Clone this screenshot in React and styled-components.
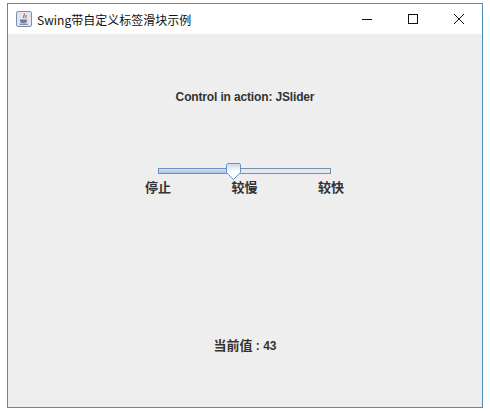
import styled, { createGlobalStyle } from "styled-components";

const GlobalStyle = createGlobalStyle`
  html, body {
    margin: 0;
    padding: 0;
    background: #fff;
  }
`;

const LABELS = ["停止", "较慢", "较快"];
const VALUE = 43;

export default function App() {
  return (
    <>
      <GlobalStyle />
      <Window>
        <TitleBar>
          <AppIcon />
          <Title>Swing带自定义标签滑块示例</Title>
          <Controls>
            <ControlButton aria-label="minimize">
              <svg width="12" height="12" viewBox="0 0 12 12">
                <path d="M1 6.5h10" stroke="#111" fill="none" />
              </svg>
            </ControlButton>
            <ControlButton aria-label="maximize">
              <svg width="12" height="12" viewBox="0 0 12 12">
                <rect x="1.5" y="1.5" width="9" height="9" stroke="#111" fill="none" />
              </svg>
            </ControlButton>
            <ControlButton aria-label="close">
              <svg width="12" height="12" viewBox="0 0 12 12">
                <path d="M1 1l10 10M11 1L1 11" stroke="#111" fill="none" />
              </svg>
            </ControlButton>
          </Controls>
        </TitleBar>
        <Content>
          <Heading>Control in action: JSlider</Heading>
          <SliderArea>
            <Track>
              <TrackFill value={VALUE} />
              <Thumb />
            </Track>
            <Ticks>
              {LABELS.map((label) => (
                <Tick key={label}>{label}</Tick>
              ))}
            </Ticks>
          </SliderArea>
          <Status>
            <Tick>当前值</Tick> : {VALUE}
          </Status>
        </Content>
      </Window>
    </>
  );
}

function AppIcon() {
  return (
    <IconBox>
      <svg width="16" height="16" viewBox="0 0 16 16">
        <rect x="0.5" y="0.5" width="15" height="15" rx="1.5" fill="#dfe6ef" stroke="#7f8fa6" />
        <path d="M8 2.5c1.5 1.5-1.5 2.5 0 4.5M10 4c.8 1-1 1.500 0 3" stroke="#d9531e" strokeWidth="1.1" fill="none" />
        <path d="M4 8.500h7v1.500c0 1.200-1 2-2.500 2h-2C5 12 4 11.200 4 10z" fill="#6b7f99" />
        <path d="M3.500 13.200h8.500" stroke="#5b6f8a" fill="none" />
      </svg>
    </IconBox>
  );
}

function Thumb() {
  return (
    <ThumbBox>
      <svg width="15" height="17" viewBox="0 0 15 17">
        <defs>
          <linearGradient id="thumbFill" x1="0" y1="0" x2="0" y2="1">
            <stop offset="0" stopColor="#c5d6ea" />
            <stop offset="0.5" stopColor="#fff" />
            <stop offset="1" stopColor="#fff" />
          </linearGradient>
        </defs>
        <path
          d="M1.500 0.500h12l1 1v8l-7 7-7-7v-8z"
          fill="url(#thumbFill)"
          stroke="#6b8fc4"
        />
      </svg>
    </ThumbBox>
  );
}

const Window = styled.div`
  box-sizing: border-box;
  width: 476px;
  height: 405px;
  margin: 3px 0 0 7px;
  border: 1px solid #4a90b8;
  display: flex;
  flex-direction: column;
`;

const TitleBar = styled.div`
  height: 30px;
  flex: none;
  background: #fff;
  display: flex;
  align-items: center;
  padding-left: 8px;
`;

const IconBox = styled.span`
  width: 16px;
  height: 16px;
  display: flex;
  margin-right: 5px;
`;

const Title = styled.span`
  font: 12px "Noto Sans CJK SC", "Liberation Sans", sans-serif;
  color: #111;
  flex: 1;
`;

const Controls = styled.div`
  display: flex;
`;

const ControlButton = styled.span`
  width: 46px;
  height: 30px;
  display: flex;
  align-items: center;
  justify-content: center;
`;

const Content = styled.div`
  flex: 1;
  background: #eeeeee;
  display: flex;
  flex-direction: column;
  align-items: center;
  color: #333;
  font-family: "Liberation Sans", "Noto Sans CJK SC", sans-serif;
  font-size: 12px;
  font-weight: bold;
`;

const Heading = styled.div`
  margin-top: 55px;
  line-height: 16px;
  letter-spacing: -0.15px;
`;

const SliderArea = styled.div`
  margin: 63px 1px 0 0;
  width: 173px;
`;

const Track = styled.div`
  position: relative;
  box-sizing: border-box;
  height: 6px;
  background: #e4e9f0;
  border: 1px solid #7d8fa8;
`;

const TrackFill = styled.div`
  box-sizing: border-box;
  height: 6px;
  margin: -1px 0 0 -1px;
  width: ${(props) => props.value}%;
  background: linear-gradient(#d6e2f2, #a9c0de);
  border: 1px solid #6b8fc4;
`;

const ThumbBox = styled.div`
  position: absolute;
  left: 67px;
  top: -6px;
  width: 15px;
  height: 17px;
  display: flex;
`;

const Ticks = styled.div`
  display: flex;
  justify-content: space-between;
  margin: 5px -13px 0;
  line-height: 16px;
`;

const Tick = styled.span`
  font-family: "Noto Sans CJK SC", sans-serif;
  font-size: 13px;
`;

const Status = styled.div`
  margin-top: 142px;
  line-height: 16px;
`;
